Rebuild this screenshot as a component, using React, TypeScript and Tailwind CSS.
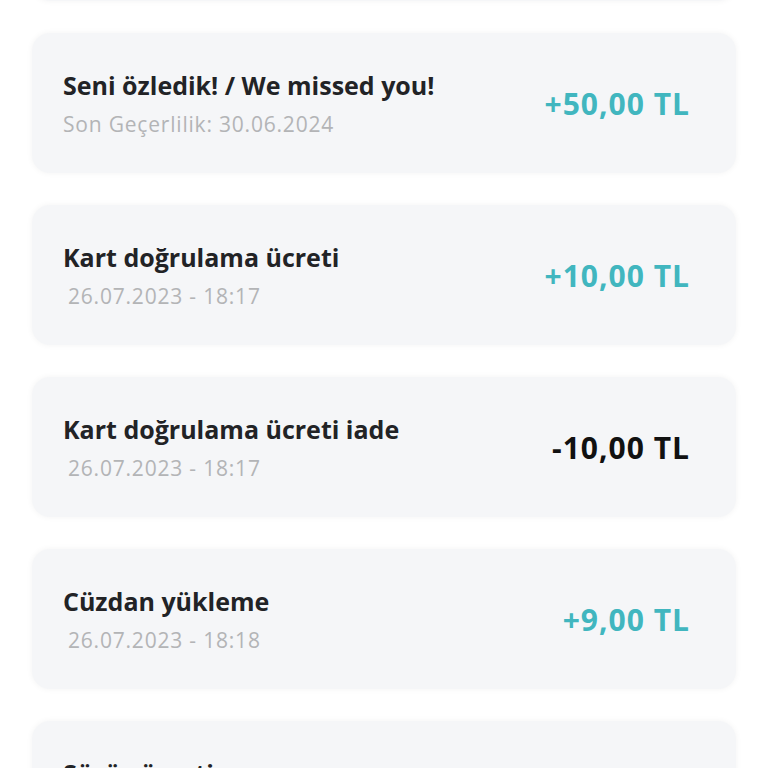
import React from 'react';

type Item = {
  title: string;
  sub: string;
  amount: string;
  positive: boolean;
  indent?: boolean;
};

const items: Item[] = [
  { title: 'Seni özledik! / We missed you!', sub: 'Son Geçerlilik: 30.06.2024', amount: '+50,00 TL', positive: true },
  { title: 'Kart doğrulama ücreti', sub: '26.07.2023 - 18:17', amount: '+10,00 TL', positive: true, indent: true },
  { title: 'Kart doğrulama ücreti iade', sub: '26.07.2023 - 18:17', amount: '-10,00 TL', positive: false, indent: true },
  { title: 'Cüzdan yükleme', sub: '26.07.2023 - 18:18', amount: '+9,00 TL', positive: true, indent: true },
  { title: 'Sürüş ücreti', sub: '26.07.2023 - 18:20', amount: '-9,00 TL', positive: false, indent: true },
];

const App: React.FC = () => {
  return (
    <div className="h-[768px] overflow-hidden bg-white font-['Open_Sans',sans-serif]">
      <div className="-mt-[139px] flex flex-col gap-[32px] px-[32px]">
        {/* previous entry, scrolled out of view */}
        <div className="h-[140px] shrink-0 rounded-[18px] bg-[#f5f6f8] shadow-[0_0_6px_rgba(0,0,0,0.05)]" />
        {items.map((it, i) => (
          <div
            key={i}
            className="flex h-[140px] shrink-0 items-center justify-between rounded-[18px] bg-[#f5f6f8] pl-[31px] pr-[46px] shadow-[0_0_6px_rgba(0,0,0,0.05)]"
          >
            <div className="flex flex-col">
              <span className="text-[25px] font-bold leading-[30px] text-[#222326]">{it.title}</span>
              <span
                className={`mt-[12px] text-[21px] leading-[24px] tracking-[0.8px] text-[#b3b4b6] ${it.indent ? 'pl-[5px]' : ''}`}
              >
                {it.sub}
              </span>
            </div>
            <span
              className={`text-[30px] font-bold tracking-[1px] ${it.positive ? 'text-[#41b6bf]' : 'text-[#111111]'}`}
            >
              {it.amount}
            </span>
          </div>
        ))}
      </div>
    </div>
  );
};

export default App;
